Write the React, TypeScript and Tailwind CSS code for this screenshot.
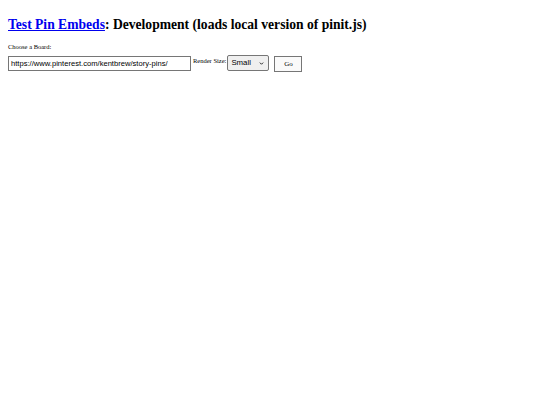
export default function App() {
  return (
    <div className="min-h-[405px] bg-white px-[8px] pt-[16px] text-black" style={{ fontFamily: '"Liberation Serif", serif' }}>
      <h2 className="text-[13.6px] font-bold leading-[18px]">
        <a href="#" className="text-[#0000ee] underline">Test Pin Embeds</a>: Development (loads local version of pinit.js)
      </h2>
      <div className="mt-[8px] text-[6.5px] leading-[9px]">Choose a Board:</div>
      <div className="mt-[5px] flex items-start">
        <input
          type="text"
          defaultValue="https://www.pinterest.com/kentbrew/story-pins/"
          className="h-[15px] w-[183px] border border-[#767676] px-[2px] text-[7.6px] text-black"
          style={{ fontFamily: '"Liberation Sans", Arial, sans-serif' }}
        />
        <span className="ml-[2px] mt-[0px] text-[6.5px] leading-[9px]">Render Size:</span>
        <div className="relative ml-[1px] mt-[-1px] h-[16px] w-[42px] rounded-[2px] border border-[#767676] bg-[#efefef]">
          <span className="absolute left-[3px] top-[1px] text-[7.8px] leading-[12px]" style={{ fontFamily: '"Liberation Sans", Arial, sans-serif' }}>Small</span>
          <svg className="absolute right-[4px] top-[6px]" width="5" height="3" viewBox="0 0 6 4">
            <path d="M0.8 0.8 L3 3 L5.2 0.8" fill="none" stroke="#000" strokeWidth="1.1" />
          </svg>
        </div>
        <button className="ml-[5px] h-[16px] w-[28px] border border-[#767676] bg-[#fafafa] text-[7px] leading-[13px]">Go</button>
      </div>
    </div>
  );
}
